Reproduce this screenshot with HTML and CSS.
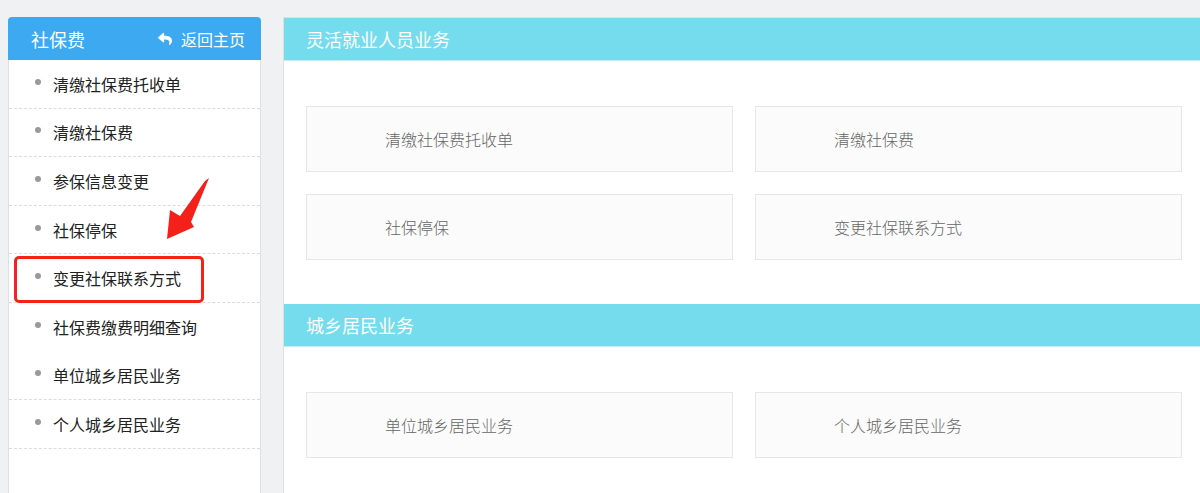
FILE: index.html
```html
<!DOCTYPE html>
<html lang="zh-CN">
<head>
<meta charset="utf-8">
<title>社保费</title>
<link rel="stylesheet" href="styles.css">
</head>
<body>
<div class="page">
  <aside class="sidebar">
    <div class="side-head">
      <span class="side-title">社保费</span>
      <a class="back" href="#">
        <svg class="back-icon" viewBox="0 0 512 512" width="16" height="14"><path fill="#fff" d="M8.3 189.8L184.3 37.9C199.7 24.5 224 35.3 224 56v80.1c160.6 1.8 288 34 288 186.2 0 61.4-39.6 122.3-83.3 154.1-13.7 9.9-33.1-2.5-28.1-18.6 45.3-145-21.5-183.5-176.6-185.7V360c0 20.7-24.3 31.5-39.7 18.2l-176-152c-11.1-9.6-11.1-26.8 0-36.4z"/></svg>
        <span>返回主页</span>
      </a>
    </div>
    <ul class="menu">
      <li class="item"><span class="dot"></span>清缴社保费托收单</li>
      <li class="item"><span class="dot"></span>清缴社保费</li>
      <li class="item"><span class="dot"></span>参保信息变更</li>
      <li class="item"><span class="dot"></span>社保停保</li>
      <li class="item"><span class="dot"></span>变更社保联系方式</li>
      <li class="item no-line"><span class="dot"></span>社保费缴费明细查询</li>
      <li class="item"><span class="dot"></span>单位城乡居民业务</li>
      <li class="item"><span class="dot"></span>个人城乡居民业务</li>
    </ul>
  </aside>
  <main class="panel">
    <section class="section">
      <h2 class="sec-head">灵活就业人员业务</h2>
      <div class="cards">
        <div class="card">清缴社保费托收单</div>
        <div class="card">清缴社保费</div>
        <div class="card">社保停保</div>
        <div class="card">变更社保联系方式</div>
      </div>
    </section>
    <section class="section">
      <h2 class="sec-head">城乡居民业务</h2>
      <div class="cards">
        <div class="card">单位城乡居民业务</div>
        <div class="card">个人城乡居民业务</div>
      </div>
    </section>
  </main>
</div>
<div class="highlight"></div>
<svg class="arrow" width="60" height="80" viewBox="150 170 60 80">
  <polygon fill="#f3211a" points="209,178 191,222 194,227 167,239 170,210 180,216 205,181"/>
</svg>
</body>
</html>
```

FILE: styles.css
```css
* { box-sizing: border-box; }
html, body { margin: 0; padding: 0; }
body {
  background: #f0f1f3;
  font-family: "Noto Sans CJK SC", "Noto Sans", sans-serif;
  width: 1200px;
  height: 493px;
  overflow: hidden;
  position: relative;
}
.page {
  display: flex;
  align-items: flex-start;
  padding: 17px 0 0 8px;
  width: 1240px;
}
.sidebar {
  width: 253px;
  flex: none;
  height: 490px;
  background: #fff;
  border: 1px solid #dde0e4;
  border-radius: 4px 4px 0 0;
}
.side-head {
  height: 43px;
  margin: -1px -1px 0 -1px;
  background: #3ca9f0;
  border-radius: 4px 4px 0 0;
  display: flex;
  align-items: center;
  justify-content: space-between;
  padding: 0 16px 0 23px;
  color: #fff;
}
.side-title { font-size: 18px; }
.back {
  display: flex;
  align-items: center;
  gap: 8px;
  color: #fff;
  text-decoration: none;
  font-size: 16px;
}
.back-icon { display: block; }
.menu {
  list-style: none;
  margin: 0;
  padding: 0;
}
.item {
  height: 48.6px;
  border-bottom: 1px dashed #dcdcdc;
  display: flex;
  align-items: center;
  padding-left: 26px;
  font-size: 16px;
  color: #222;
}
.item.no-line { border-bottom-color: transparent; }
.dot {
  width: 6px;
  height: 6px;
  border-radius: 50%;
  background: #999;
  margin-right: 12px;
  margin-top: -4px;
  flex: none;
}
.panel {
  margin-left: 22px;
  width: 922px;
  flex: none;
  height: 480px;
  background: #fff;
  border: 1px solid #dde0e4;
}
.sec-head {
  margin: 0;
  height: 43px;
  background: #74dcec;
  border-bottom: 1px solid #c8ecf2;
  color: #fff;
  font-weight: normal;
  font-size: 18px;
  display: flex;
  align-items: center;
  padding-left: 22px;
  padding-bottom: 1px;
}
.cards {
  display: grid;
  grid-template-columns: 427px 427px;
  gap: 22px;
  padding: 45px 22px 44px 22px;
}
.card {
  height: 66px;
  border: 1px solid #e6e6e6;
  background: #fbfbfb;
  display: flex;
  align-items: center;
  padding-left: 78px;
  font-size: 16px;
  font-weight: 300;
  color: #666;
}
.highlight {
  position: absolute;
  left: 14px;
  top: 256px;
  width: 190px;
  height: 47px;
  border: 3px solid #f3231c;
  border-radius: 5px;
}
.arrow {
  position: absolute;
  left: 150px;
  top: 170px;
}
```
